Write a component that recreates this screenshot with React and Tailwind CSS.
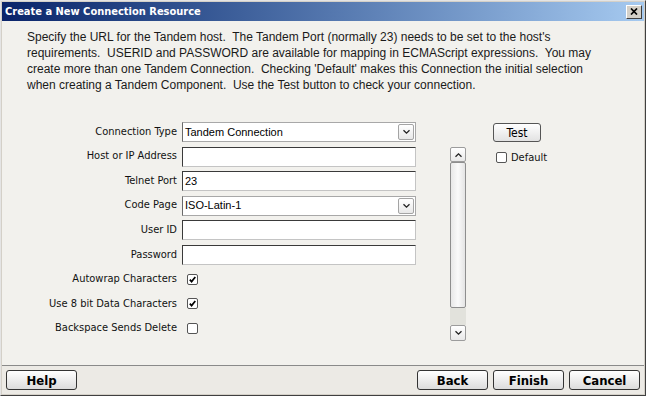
import React from "react";

const cond = { fontFamily: "'DejaVu Sans Condensed', 'DejaVu Sans', sans-serif", fontStretch: "condensed" };
const arial = { fontFamily: "'Liberation Sans', Arial, sans-serif" };

function Chevron({ up }) {
  return (
    <svg width="9" height="6" viewBox="0 0 9 6">
      {up ? (
        <path d="M1.5 4.8 L4.5 1.8 L7.5 4.8" fill="none" stroke="#222" strokeWidth="1.3" />
      ) : (
        <path d="M1.5 1.2 L4.5 4.2 L7.5 1.2" fill="none" stroke="#222" strokeWidth="1.3" />
      )}
    </svg>
  );
}

function Combo({ value }) {
  return (
    <div className="h-[20px] w-[234px] bg-white border border-[#a8a8a8] border-l-[#6a6a6a] flex items-center justify-between pl-[2px] pr-[1px]">
      <span className="text-[11px] text-black leading-none" style={arial}>{value}</span>
      <div className="w-[16px] h-[16px] rounded-[2px] border border-[#a4a4a4] bg-gradient-to-b from-white to-[#e8e8e8] flex items-center justify-center">
        <Chevron />
      </div>
    </div>
  );
}

function Field({ value }) {
  return (
    <div className="h-[20px] w-[234px] bg-white border border-t-[#3a3a3a] border-l-[#3a3a3a] border-r-[#c4c4c4] border-b-[#c4c4c4] flex items-center pl-[2px]">
      <span className="text-[11px] text-black leading-none" style={arial}>{value}</span>
    </div>
  );
}

function Check({ checked }) {
  return (
    <div className="w-[11px] h-[11px] rounded-[2px] border border-[#555] bg-white flex items-center justify-center">
      {checked && (
        <svg width="7" height="7" viewBox="0 0 7 7">
          <path d="M0.8 3.6 L2.6 5.6 L6.3 1" fill="none" stroke="#000" strokeWidth="1.7" />
        </svg>
      )}
    </div>
  );
}

function Label({ children }) {
  return (
    <div className="h-[24px] flex items-center justify-end text-[11px] text-[#111] whitespace-nowrap" style={cond}>
      {children}
    </div>
  );
}

function Cell({ children }) {
  return <div className="h-[24px] flex items-center">{children}</div>;
}

function FooterButton({ children, className }) {
  return (
    <button
      className={"h-[20px] w-[71px] rounded-[3px] border border-[#333] bg-gradient-to-b from-white to-[#dcdcdc] text-[13px] font-bold text-black leading-none flex items-center justify-center " + (className || "")}
      style={cond}
    >
      {children}
    </button>
  );
}

export default function App() {
  const lines = [
    "Specify the URL for the Tandem host.  The Tandem Port (normally 23) needs to be set to the host's",
    "requirements.  USERID and PASSWORD are available for mapping in ECMAScript expressions.  You may",
    "create more than one Tandem Connection.  Checking 'Default' makes this Connection the initial selection",
    "when creating a Tandem Component.  Use the Test button to check your connection.",
  ];
  return (
    <div className="w-[646px] h-[396px] bg-[#d4d0c8] border border-t-[#e4e4e4] border-l-[#e4e4e4] border-r-[#404040] border-b-[#404040] p-[1px] flex flex-col overflow-hidden">
      {/* Title bar */}
      <div className="h-[19px] bg-gradient-to-r from-[#0a246a] to-[#a6caf0] flex items-center justify-between pl-[3px] pr-[2px] shrink-0">
        <span className="text-white font-bold text-[11px] leading-none" style={cond}>
          Create a New Connection Resource
        </span>
        <div className="w-[16px] h-[14px] bg-[#d4d0c8] border border-t-white border-l-white border-r-[#404040] border-b-[#404040] flex items-center justify-center">
          <svg width="8" height="7" viewBox="0 0 8 7">
            <path d="M1 0.5 L7 6.5 M7 0.5 L1 6.5" stroke="#000" strokeWidth="1.7" />
          </svg>
        </div>
      </div>

      {/* Body */}
      <div className="flex-1 bg-[#f2f1ed] flex flex-col pl-[25px] pt-[8px]">
        <div className="text-[12px] leading-[16px] text-[#1a1a1a] whitespace-pre" style={arial}>
          {lines.map((l, i) => (
            <div key={i}>{l}</div>
          ))}
        </div>

        <div className="flex mt-[27px]">
          <div className="grid grid-cols-[150px_234px] gap-x-[5px]">
            <Label>Connection Type</Label>
            <Cell><Combo value="Tandem Connection" /></Cell>
            <Label>Host or IP Address</Label>
            <Cell><Field value="" /></Cell>
            <Label>Telnet Port</Label>
            <Cell><Field value="23" /></Cell>
            <Label>Code Page</Label>
            <Cell><Combo value="ISO-Latin-1" /></Cell>
            <Label>User ID</Label>
            <Cell><Field value="" /></Cell>
            <Label>Password</Label>
            <Cell><Field value="" /></Cell>
            <Label>Autowrap Characters</Label>
            <Cell><div className="ml-[5px]"><Check checked /></div></Cell>
            <Label>Use 8 bit Data Characters</Label>
            <Cell><div className="ml-[5px]"><Check checked /></div></Cell>
            <Label>Backspace Sends Delete</Label>
            <Cell><div className="ml-[5px]"><Check /></div></Cell>
          </div>

          {/* Scrollbar */}
          <div className="ml-[34px] mt-[27px] w-[16px] h-[194px] flex flex-col">
            <div className="h-[15px] rounded-[2px] border border-[#9c9c9c] bg-gradient-to-b from-white to-[#e8e8e8] flex items-center justify-center">
              <Chevron up />
            </div>
            <div className="h-[146px] rounded-[2px] border border-[#8e8e8e] bg-gradient-to-r from-[#e8e8e8] via-[#fafafa] to-[#e4e4e4]"></div>
            <div className="flex-1 bg-[#e2e2dc]"></div>
            <div className="h-[16px] rounded-[2px] border border-[#9c9c9c] bg-gradient-to-b from-white to-[#e8e8e8] flex items-center justify-center">
              <Chevron />
            </div>
          </div>

          {/* Right column */}
          <div className="ml-[27px] flex flex-col pt-[3px]">
            <button
              className="w-[48px] h-[19px] rounded-[3px] border border-[#555] bg-gradient-to-b from-white to-[#e2e2e2] text-[12px] text-black leading-none flex items-center justify-center"
              style={cond}
            >
              Test
            </button>
            <div className="flex items-center mt-[10px] ml-[3px]">
              <Check />
              <span className="ml-[4px] text-[11px] text-[#111] leading-none" style={cond}>Default</span>
            </div>
          </div>
        </div>
      </div>

      {/* Footer */}
      <div className="h-[29px] shrink-0 bg-[#eceae5] border-t border-[#8a8a8a] flex items-start pt-[4px] px-[4px]">
        <FooterButton>Help</FooterButton>
        <div className="flex-1"></div>
        <div className="flex gap-[5px]">
          <FooterButton>Back</FooterButton>
          <FooterButton>Finish</FooterButton>
          <FooterButton>Cancel</FooterButton>
        </div>
      </div>
    </div>
  );
}
